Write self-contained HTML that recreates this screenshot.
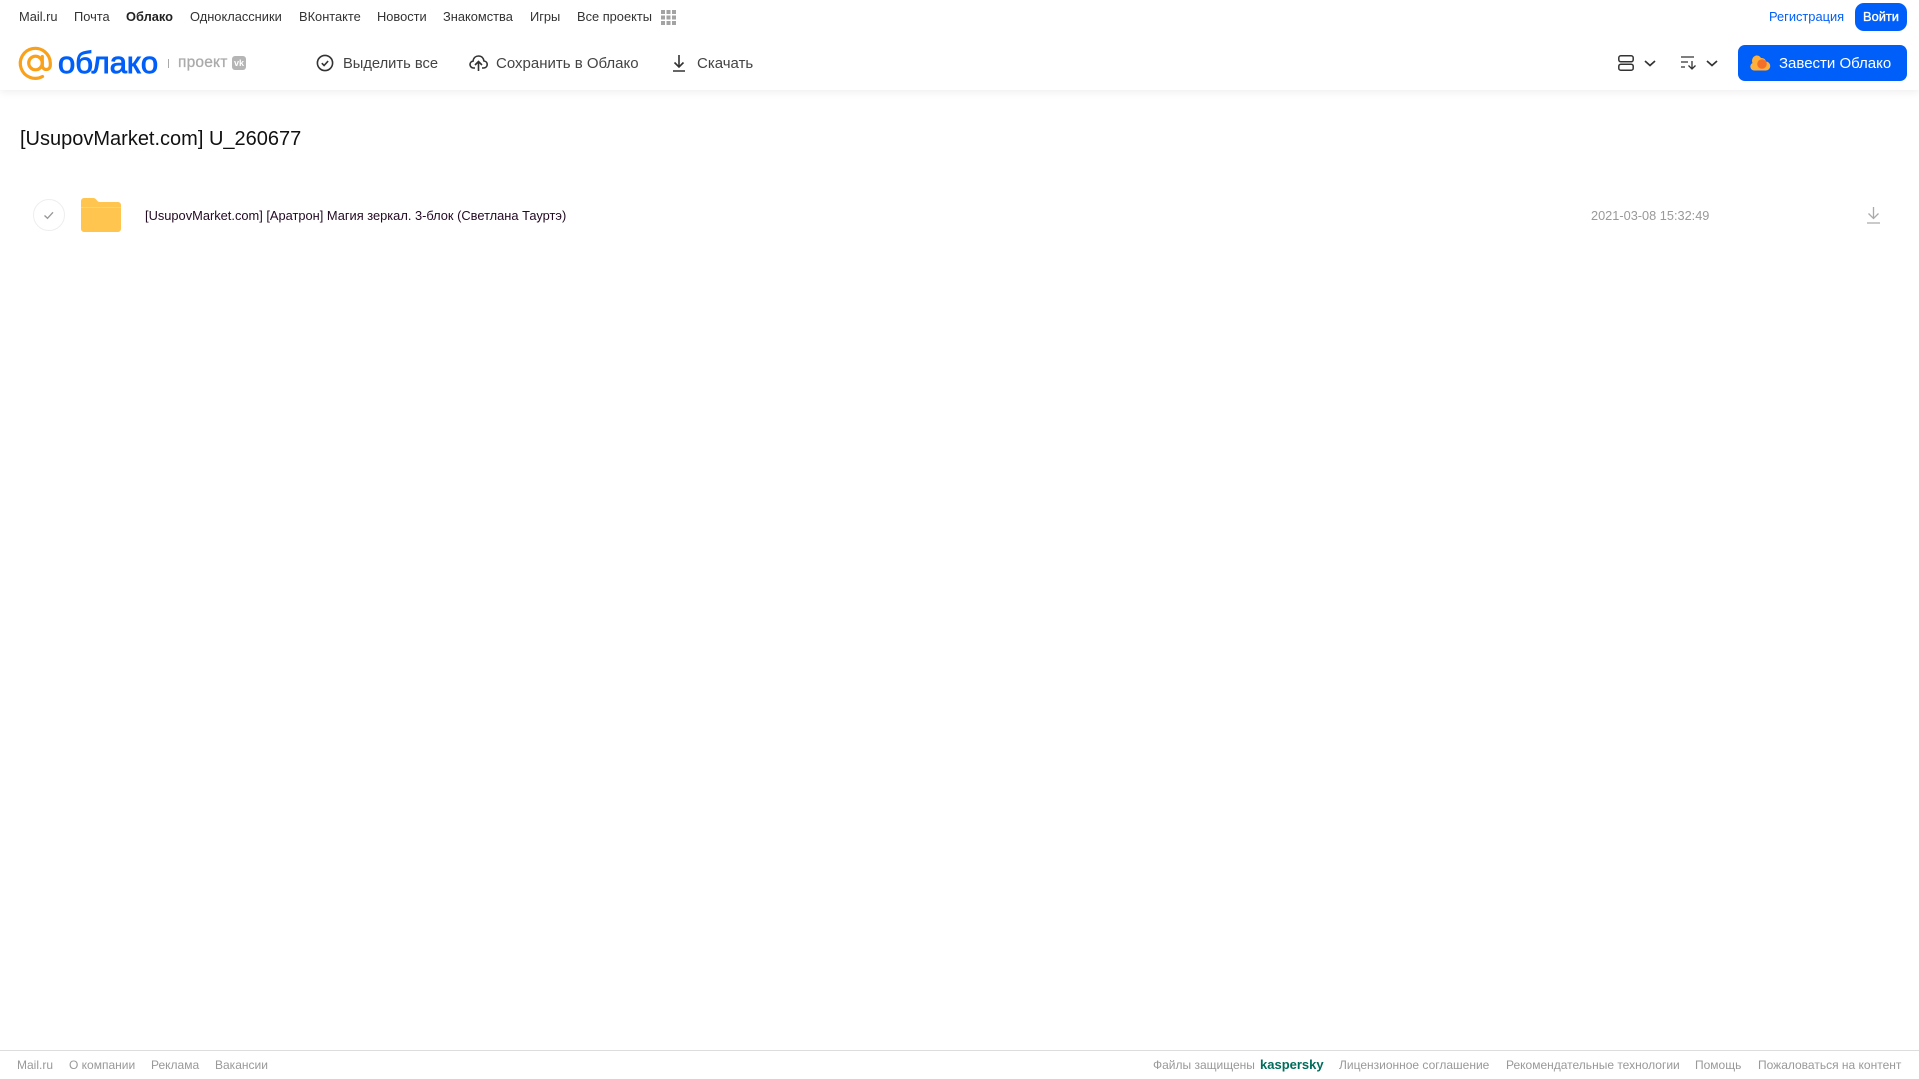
<!DOCTYPE html>
<html lang="ru"><head><meta charset="utf-8"><title>Облако</title>
<style>
html,body{margin:0;padding:0;background:#fff}
body{width:1919px;height:1079px;position:relative;overflow:hidden;font-family:"Liberation Sans",Arial,sans-serif}
.t{position:absolute;white-space:nowrap;line-height:20px;height:20px}
.n{font-size:12.85px;color:#333;top:7px}
.b{font-size:15px;color:#444;top:54px}
.f{font-size:12px;color:#999;top:1055px}
svg{position:absolute;overflow:visible}
#hd{position:absolute;left:0;top:0;width:1919px;height:90px;background:#fff;box-shadow:0 2px 8px rgba(0,0,0,.07)}
</style></head><body>
<div id="hd"></div>
<span class="t n" style="left:19px">Mail.ru</span>
<span class="t n" style="left:74px">Почта</span>
<span class="t n" style="left:126px;font-weight:bold;color:#222">Облако</span>
<span class="t n" style="left:190px">Одноклассники</span>
<span class="t n" style="left:299px">ВКонтакте</span>
<span class="t n" style="left:377px">Новости</span>
<span class="t n" style="left:443px">Знакомства</span>
<span class="t n" style="left:530px">Игры</span>
<span class="t n" style="left:577px">Все проекты</span>
<svg style="left:661px;top:10px" width="15" height="15" fill="#a3a3a3"><rect x="0" y="0" width="4" height="4"/><rect x="5.5" y="0" width="4" height="4"/><rect x="11" y="0" width="4" height="4"/><rect x="0" y="5.5" width="4" height="4"/><rect x="5.5" y="5.5" width="4" height="4"/><rect x="11" y="5.5" width="4" height="4"/><rect x="0" y="11" width="4" height="4"/><rect x="5.5" y="11" width="4" height="4"/><rect x="11" y="11" width="4" height="4"/></svg>
<span class="t n" style="left:1769px;color:#005ff9">Регистрация</span>
<div style="position:absolute;left:1855px;top:3px;width:52px;height:28px;border-radius:9px;background:#005ff9"></div>
<span class="t n" style="left:1863px;color:#fff;-webkit-text-stroke:.35px #fff">Войти</span>
<svg style="left:19px;top:46px" width="34" height="34" viewBox="0 0 34 34" fill="none" stroke="#f9a11b" stroke-width="3.2"><circle cx="16.500" cy="17" r="6.800"/><path d="M23.300 10.500V19.500a4 4 0 0 0 8 0V17A15 15 0 1 0 23.500 30.500" stroke-linecap="round"/></svg>
<span class="t" style="left:58px;top:47px;height:32px;line-height:32px;font-size:31px;color:#005ff9;-webkit-text-stroke:.9px #005ff9">облако</span>
<div style="position:absolute;left:168px;top:59px;width:1px;height:9px;background:#aaa"></div>
<span class="t" style="left:178px;top:53px;font-size:15.5px;color:#aaa;-webkit-text-stroke:.3px #aaa;letter-spacing:.2px">проект</span>
<div style="position:absolute;left:232px;top:56px;width:14px;height:14px;border-radius:3px;background:#b5b5b5"></div>
<span class="t" style="left:234px;top:53px;font-size:9px;color:#fff;font-weight:bold">vk</span>
<svg style="left:316px;top:54px" width="18" height="18" viewBox="0 0 18 18" fill="none" stroke="#333" stroke-width="1.6"><circle cx="9" cy="9" r="7.6"/><path d="M5.800 9.200l2.300 2.300 4-4.400"/></svg>
<span class="t b" style="left:343px;font-size:14.7px">Выделить все</span>
<svg style="left:469px;top:54px" width="19" height="18" viewBox="0 0 19 18" fill="none" stroke="#333" stroke-width="1.6"><path d="M6 14H4.500C2.500 14 1 12.300 1 10.500S2.300 7.400 4 7.200C4.500 3.600 7 2 9.500 2 12.500 2 14.500 4 15 7c2 .2 3.200 1.800 3.200 3.500S17 14 14.500 14H13"/><path d="M9.500 17V8M6 11l3.500-3.500L13 11"/></svg>
<span class="t b" style="left:496px">Сохранить в Облако</span>
<svg style="left:671px;top:54px" width="16" height="18" viewBox="0 0 16 18" fill="none" stroke="#333" stroke-width="1.6"><path d="M8 1v12M3.500 8.500L8 13l4.500-4.500M2 17h12"/></svg>
<span class="t b" style="left:697px">Скачать</span>
<svg style="left:1618px;top:55px" width="16" height="16" viewBox="0 0 16 16" fill="none" stroke="#333" stroke-width="1.500"><rect x=".8" y=".8" width="14.400" height="6" rx="2"/><rect x=".8" y="9.200" width="14.400" height="6" rx="2"/></svg>
<svg style="left:1644px;top:60px" width="12" height="7" fill="none" stroke="#333" stroke-width="1.700"><path d="M1 1l5 4.500L11 1"/></svg>
<svg style="left:1681px;top:56px" width="16" height="14" fill="none" stroke="#333" stroke-width="1.300"><path d="M0 1h13M0 6h7M0 11h4M11 5v8M7.500 9.500L11 13l3.500-3.500"/></svg>
<svg style="left:1706px;top:60px" width="12" height="7" fill="none" stroke="#333" stroke-width="1.700"><path d="M1 1l5 4.500L11 1"/></svg>
<div style="position:absolute;left:1738px;top:45px;width:169px;height:36px;border-radius:7px;background:#005ff9"></div>
<svg style="left:1751px;top:55px" width="19" height="16" viewBox="0 0 19 16"><path d="M4 15.500A4 4 0 0 1 1.500 8 5.500 5.500 0 0 1 5 0.500a5 5 0 0 1 5 2.500 4.500 4.500 0 0 1 5 3.500A4.300 4.300 0 0 1 14.500 15.500z" fill="#ffb03a"/><circle cx="11" cy="9" r="4.800" fill="#f4702a"/></svg>
<span class="t b" style="left:1779px;color:#fff">Завести Облако</span>
<span class="t" style="left:20px;top:127px;height:24px;line-height:24px;font-size:20px;color:#111">[UsupovMarket.com] U_260677</span>
<svg style="left:33px;top:199px" width="32" height="32" fill="none"><circle cx="16" cy="16" r="15.500" stroke="#eee"/><path d="M11.500 16.500l3 2.800 5.500-6" stroke="#999" stroke-width="1.400"/></svg>
<svg style="left:81px;top:198px" width="40" height="34" viewBox="0 0 40 34"><path d="M3 0h9c2 0 3 1 4 2.500.7 1 1.500 1.500 3 1.500h18a3 3 0 0 1 3 3v24a3 3 0 0 1-3 3H3a3 3 0 0 1-3-3V3a3 3 0 0 1 3-3z" fill="#ffc54f"/><path d="M0 9h40v.8H0z" fill="#ffd67e"/></svg>
<span class="t" style="left:145px;top:206px;font-size:12.85px;color:#220a22">[UsupovMarket.com] [Аратрон] Магия зеркал. 3-блок (Светлана Тауртэ)</span>
<span class="t" style="left:1591px;top:206px;font-size:12.75px;color:#999">2021-03-08 15:32:49</span>
<svg style="left:1867px;top:207px" width="13" height="17" fill="none" stroke="#aaa" stroke-width="1.300"><path d="M6.500 0v11M1.500 6.500l5 5 5-5M0 16h13"/></svg>
<div style="position:absolute;left:0;top:1050px;width:1919px;height:1px;background:#ddd"></div>
<span class="t f" style="left:17px">Mail.ru</span>
<span class="t f" style="left:69px">О компании</span>
<span class="t f" style="left:151px">Реклама</span>
<span class="t f" style="left:215px">Вакансии</span>
<span class="t f" style="left:1153px">Файлы защищены</span>
<span class="t f" style="left:1260px;color:#006d5c;font-weight:bold;font-size:13px">kaspersky</span>
<span class="t f" style="left:1339px">Лицензионное соглашение</span>
<span class="t f" style="left:1506px">Рекомендательные технологии</span>
<span class="t f" style="left:1695px">Помощь</span>
<span class="t f" style="left:1758px">Пожаловаться на контент</span>
</body></html>
